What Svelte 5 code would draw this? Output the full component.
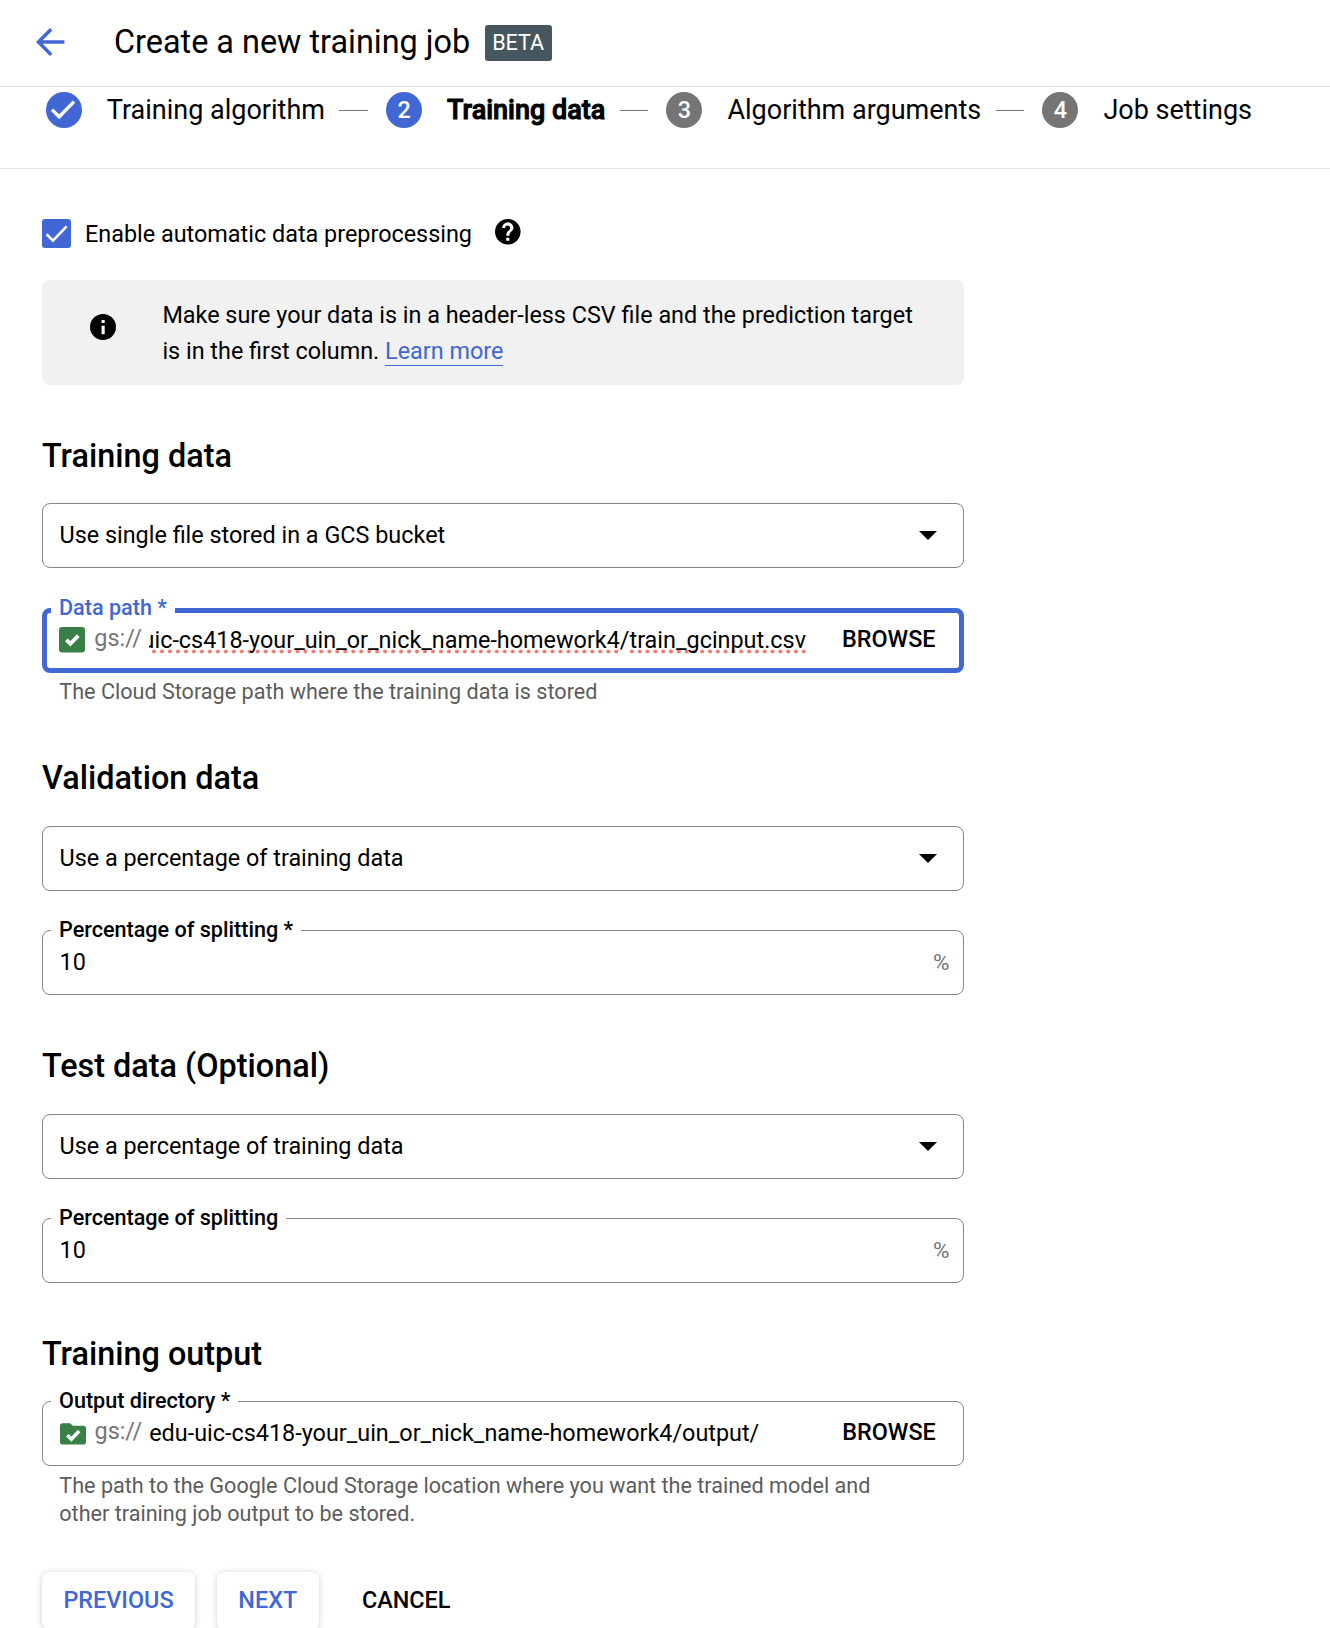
<script>
  const steps = [
    { label: 'Training algorithm', state: 'done' },
    { label: 'Training data', state: 'current' },
    { label: 'Algorithm arguments', state: 'todo' },
    { label: 'Job settings', state: 'todo' }
  ];
</script>

{#snippet select(text)}
  <div class="field">
    <span class="value">{text}</span>
    <svg class="caret" viewBox="0 0 18 9"><path d="M0 0h18L9 9z" fill="#000" /></svg>
  </div>
{/snippet}

{#snippet percent(label)}
  <div class="field labelled">
    <span class="label">{label}</span>
    <span class="value">10</span>
    <span class="unit">%</span>
  </div>
{/snippet}

<header>
  <svg class="back" viewBox="0 0 29 28" fill="none" stroke="#4067d3" stroke-width="3.5">
    <path d="M28.4 14H3M15.2 1.2 2.4 14l12.8 12.8" />
  </svg>
  <h1>Create a new training job</h1>
  <span class="beta">BETA</span>
</header>

<nav>
  {#each steps as step, i}
    {#if i > 0}<span class="dash"></span>{/if}
    <span class="dot {step.state}">
      {#if step.state === 'done'}
        <svg viewBox="0 0 36 36" fill="none" stroke="#fff" stroke-width="3.4"><path d="M6 17.6 13.2 24.8 28 9.6" /></svg>
      {:else}{i + 1}{/if}
    </span>
    <span class="name {step.state}">{step.label}</span>
  {/each}
</nav>

<main>
  <div class="enable">
    <span class="checkbox">
      <svg viewBox="0 0 29 29" fill="none" stroke="#fff" stroke-width="2.7"><path d="M4.6 15.2 11 21.6 24.6 7.4" /></svg>
    </span>
    <span>Enable automatic data preprocessing</span>
    <svg class="help" viewBox="2 2 20 20"><path d="M12 2C6.48 2 2 6.48 2 12s4.48 10 10 10 10-4.48 10-10S17.52 2 12 2z" /><path fill="#fff" d="M13.2 19h-2.4v-2.4h2.4zM15.3 11.2l-.9.92c-.72.73-1.17 1.38-1.17 2.88h-2.4v-.5c0-1.1.45-2.1 1.17-2.83l1.24-1.26c.37-.36.59-.86.59-1.41a2 2 0 0 0-4 0H7.6a4.2 4.2 0 0 1 8.8 0c0 .88-.5 1.6-1.1 2.2z" /></svg>
  </div>

  <div class="notice">
    <svg viewBox="2 2 20 20"><circle cx="12" cy="12" r="10" /><path fill="#fff" d="M10.9 11h2.4v6.6h-2.4zM10.9 6.6h2.4V9h-2.4z" /></svg>
    <p>Make sure your data is in a header-less CSV file and the prediction target is in the first column. <a href="#learn">Learn more</a></p>
  </div>

  <section class="training">
    <h2>Training data</h2>
    {@render select('Use single file stored in a GCS bucket')}
    <div class="field labelled focused">
      <span class="label">Data path *</span>
      <svg class="badge" viewBox="0 0 26 26"><rect width="26" height="25.6" rx="3" fill="#397f48" /><path d="M7.4 12.8 11.4 16.8 19.2 8.6" fill="none" stroke="#fff" stroke-width="3.8" /></svg>
      <span class="scheme">gs://</span>
      <span class="path scrolled"><span class="inner"><span class="misspelt bucket">edu-uic-cs418-your_uin_or_nick_name-homework4</span>/<span class="misspelt file">train_gcinput.csv</span></span></span>
      <span class="browse">BROWSE</span>
    </div>
    <p class="hint">The Cloud Storage path where the training data is stored</p>
  </section>

  <section class="validation">
    <h2>Validation data</h2>
    {@render select('Use a percentage of training data')}
    {@render percent('Percentage of splitting *')}
  </section>

  <section class="test">
    <h2>Test data (Optional)</h2>
    {@render select('Use a percentage of training data')}
    {@render percent('Percentage of splitting')}
  </section>

  <section class="output">
    <h2>Training output</h2>
    <div class="field labelled">
      <span class="label">Output directory *</span>
      <svg class="badge" viewBox="0 0 26 26"><path d="M2.6 2.2h7.6l2.6 2.6h10.6A2.6 2.6 0 0 1 26 7.4v13.4a2.8 2.8 0 0 1-2.8 2.8H2.8A2.8 2.8 0 0 1 0 20.8V4.8a2.6 2.6 0 0 1 2.6-2.6z" fill="#397f48" /><path d="M7.4 14.2 11.4 18.2 19.2 10" fill="none" stroke="#fff" stroke-width="3.6" /></svg>
      <span class="scheme">gs://</span>
      <span class="path">edu-uic-cs418-your_uin_or_nick_name-homework4/output/</span>
      <span class="browse">BROWSE</span>
    </div>
    <p class="hint">The path to the Google Cloud Storage location where you want the trained model and other training job output to be stored.</p>
  </section>

  <div class="actions">
    <button class="raised">PREVIOUS</button>
    <button class="raised">NEXT</button>
    <button>CANCEL</button>
  </div>
</main>

<style>
  :global(body) {
    margin: 0;
    background: #fff;
    font-family: Roboto, sans-serif;
    color: #000;
  }
  :global(#app) {
    height: 1628px;
    overflow: hidden;
  }
  header {
    box-sizing: border-box;
    height: 87px;
    display: flex;
    align-items: center;
    padding: 0 0 1px 36px;
    border-bottom: 1px solid #dfdfdf;
  }
  .back {
    width: 29px;
    height: 28px;
    margin-top: -2px;
  }
  h1 {
    margin: -2px 0 0 49px;
    font-size: 32.4px;
    font-weight: 400;
    line-height: 40px;
    white-space: nowrap;
  }
  .beta {
    margin: 1px 0 0 14.5px;
    width: 67px;
    height: 36px;
    border-radius: 3px;
    background: #475760;
    color: #fff;
    font-size: 21.6px;
    line-height: 36px;
    text-align: center;
  }
  nav {
    box-sizing: border-box;
    height: 82px;
    display: flex;
    align-items: flex-start;
    padding: 5px 0 0 45.8px;
    border-bottom: 1px solid #dfdfdf;
    white-space: nowrap;
  }
  .dot {
    flex: none;
    width: 36px;
    height: 36px;
    border-radius: 50%;
    background: #757575;
    color: #fff;
    font-size: 23.4px;
    font-weight: 500;
    line-height: 36px;
    text-align: center;
  }
  .dot.done, .dot.current {
    background: #4067d3;
  }
  .dot svg {
    display: block;
  }
  .name {
    margin-left: 25px;
    font-size: 27px;
    line-height: 36px;
  }
  .name.current {
    font-weight: 500;
    -webkit-text-stroke: 1px #000;
  }
  .dash {
    flex: none;
    width: 28.8px;
    height: 1px;
    margin: 18px 18px 0 14.3px;
    background: #757575;
  }
  main {
    width: 922px;
    margin-left: 42px;
    padding-top: 50px;
    font-size: 23.4px;
  }
  .enable {
    display: flex;
    align-items: center;
    height: 29px;
  }
  .checkbox {
    width: 29px;
    height: 29px;
    margin-right: 14px;
    border-radius: 3px;
    background: #4067d3;
  }
  .checkbox svg {
    display: block;
  }
  .help {
    width: 25.6px;
    height: 25.6px;
    margin: -2.5px 0 0 23.3px;
  }
  .notice {
    box-sizing: border-box;
    height: 105px;
    margin-top: 32px;
    padding: 17px 40px 0 48.4px;
    display: flex;
    border-radius: 7px;
    background: #f1f1f1;
  }
  .notice svg {
    flex: none;
    width: 26px;
    height: 26px;
    margin: 17px 46px 0 0;
  }
  .notice p {
    margin: 0;
    line-height: 36px;
  }
  a {
    border-bottom: 1px solid #4067d3;
    color: #4067d3;
    text-decoration: none;
  }
  h2 {
    margin: 0;
    height: 36px;
    font-size: 32.4px;
    font-weight: 500;
    line-height: 36px;
  }
  section {
    padding-top: 53px;
  }
  .validation {
    padding-top: 54px;
  }
  .validation h2, .test h2 {
    margin-bottom: 30px;
  }
  .training h2, .output h2 {
    margin-bottom: 29px;
  }
  .field {
    position: relative;
    box-sizing: border-box;
    height: 65px;
    padding: 0 16px 0 16.5px;
    display: flex;
    align-items: center;
    border: 1px solid #80868b;
    border-radius: 8px;
  }
  .field + .field {
    margin-top: 39px;
  }
  .field.labelled {
    align-items: flex-start;
    padding-top: 15px;
    line-height: 32px;
  }
  .value {
    flex: 1;
    margin-top: -1px;
  }
  .labelled .value {
    margin-top: 0;
  }
  .caret {
    width: 18px;
    height: 9px;
    margin: -1px 10px 0 0;
  }
  .unit {
    margin-right: -2.5px;
    color: #757575;
    font-size: 22.5px;
  }
  .label {
    position: absolute;
    top: -15px;
    left: 8px;
    padding: 0 8px;
    background: #fff;
    font-size: 21.6px;
    font-weight: 500;
    line-height: 28px;
  }
  .focused {
    border: 5px solid #4067d3;
  }
  .field + .field.focused {
    margin-top: 40px;
    padding: 11px 12px 0 12.3px;
  }
  .focused .label {
    top: -19px;
    left: 4px;
    color: #4067d3;
  }
  .badge {
    flex: none;
    width: 26px;
    height: 26px;
    margin-top: 3px;
  }
  .output .badge {
    margin-top: 4px;
  }
  .scheme {
    margin: -2px 0 0 9px;
    width: 54.7px;
    color: #757575;
  }
  .path {
    width: 657px;
    white-space: nowrap;
  }
  .scrolled {
    display: flex;
    justify-content: flex-end;
    overflow: hidden;
  }
  .inner {
    flex: none;
  }
  .misspelt {
    background-image: radial-gradient(circle at center, #f0776e 1.5px, transparent 2.3px);
    background-repeat: repeat-x;
  }
  .bucket {
    background-position: right bottom;
    background-size: 7.97px 5px;
  }
  .file {
    background-position: -2px bottom;
    background-size: 7.82px 5px;
  }
  .browse {
    margin: -1px 0 0 36px;
    font-weight: 500;
  }
  .hint {
    margin: 5px 0 0;
    padding: 0 60px 0 17.3px;
    color: #5c5c5c;
    font-size: 21.6px;
    line-height: 28px;
  }
  .output .hint {
    margin-top: 6px;
  }
  .actions {
    display: flex;
    margin-top: 44px;
  }
  button {
    height: 57px;
    margin-right: 22px;
    padding: 0 21.4px;
    border: 0;
    border-radius: 7px;
    background: none;
    font: 500 23.4px/57px Roboto, sans-serif;
    color: #000;
  }
  .raised {
    color: #4067d3;
    background: #fff;
    box-shadow: 0 1px 6px rgba(0, 0, 0, 0.2);
  }
</style>
